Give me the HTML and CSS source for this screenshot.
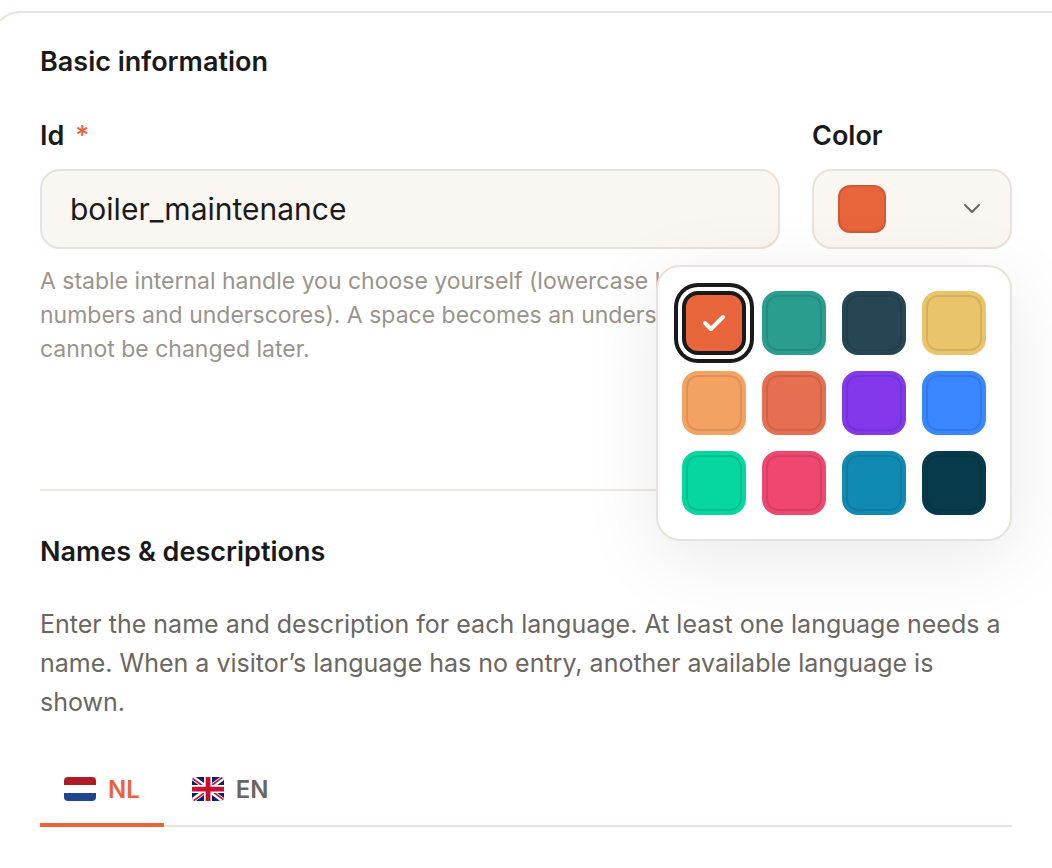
FILE: index.html
```html
<!DOCTYPE html>
<html lang="en">
<head>
  <meta charset="UTF-8" />
  <meta name="viewport" content="width=device-width, initial-scale=1.0" />
  <title>Basic information</title>
  <link rel="stylesheet" href="styles.css">
</head>
<body>

<form class="card">
  <section class="basic">
    <h2>Basic information</h2>

    <div class="fields">
      <div class="field">
        <label for="service-id">Id <span class="required">*</span></label>
        <input type="text" id="service-id" class="control" value="boiler_maintenance" required aria-describedby="id-hint">
        <p class="hint" id="id-hint">A stable internal handle you choose yourself (lowercase letters, numbers and underscores). A space becomes an underscore. It cannot be changed later.</p>
      </div>

      <div class="field color-field">
        <label for="color-trigger">Color</label>
        <div class="color-picker">
          <button type="button" id="color-trigger" class="control color-trigger" aria-expanded="true">
            <span class="current-color"></span>
            <svg class="chevron" viewBox="0 0 24 24" aria-hidden="true"><path d="M5 8l7 7 7-7"/></svg>
          </button>

          <div class="palette" id="palette">
            <button type="button" class="swatch orange selected" aria-label="Orange" aria-pressed="true">
              <svg viewBox="0 0 24 24" aria-hidden="true"><path d="M3 12l6 6L21 6"/></svg>
            </button>
            <button type="button" class="swatch teal" aria-label="Teal"></button>
            <button type="button" class="swatch slate" aria-label="Slate"></button>
            <button type="button" class="swatch yellow" aria-label="Yellow"></button>
            <button type="button" class="swatch sand" aria-label="Sand"></button>
            <button type="button" class="swatch coral" aria-label="Coral"></button>
            <button type="button" class="swatch purple" aria-label="Purple"></button>
            <button type="button" class="swatch blue" aria-label="Blue"></button>
            <button type="button" class="swatch mint" aria-label="Mint"></button>
            <button type="button" class="swatch pink" aria-label="Pink"></button>
            <button type="button" class="swatch ocean" aria-label="Ocean"></button>
            <button type="button" class="swatch navy" aria-label="Navy"></button>
          </div>
        </div>
      </div>
    </div>
  </section>

  <section class="names">
    <h2>Names &amp; descriptions</h2>
    <p class="intro">Enter the name and description for each language. At least one language needs a name. When a visitor’s language has no entry, another available language is shown.</p>

    <div class="tabs" role="tablist">
      <button type="button" class="tab active" role="tab" aria-selected="true">
        <svg class="flag" viewBox="0 0 32 24" aria-hidden="true">
          <rect width="32" height="8" fill="#ae1c28"/>
          <rect y="8" width="32" height="8" fill="#fff"/>
          <rect y="16" width="32" height="8" fill="#21468b"/>
        </svg>
        NL
      </button>
      <button type="button" class="tab" role="tab" aria-selected="false">
        <svg class="flag" viewBox="0 0 640 480" aria-hidden="true">
          <path fill="#012169" d="M0 0h640v480H0z"/>
          <path fill="#fff" d="m75 0 244 181L562 0h78v62L400 241l240 178v61h-80L320 301 81 480H0v-60l239-178L0 64V0z"/>
          <path fill="#c8102e" d="m424 281 216 159v40L369 281zm-184 20 6 35L54 480H0zM640 0v3L391 191l2-44L590 0zM0 0l239 176h-60L0 42z"/>
          <path fill="#fff" d="M241 0v480h160V0zM0 160v160h640V160z"/>
          <path fill="#c8102e" d="M0 193v96h640v-96zM273 0v480h96V0z"/>
        </svg>
        EN
      </button>
    </div>
  </section>
</form>

</body>
</html>
```
FILE: styles.css
```css
* {
  box-sizing: border-box;
}

body {
  margin: 0;
  height: 100vh;
  overflow: hidden;
  font-family: Inter, "Liberation Sans", sans-serif;
  color: #1a1a1a;
  background: white;
}

button,
input {
  font-family: inherit;
  color: inherit;
}

.card {
  margin: 11px -40px 0 -8px;
  padding: 30px 78px 80px 46px;
  border: 2px solid #e8e2da;
  border-radius: 28px;
  background: white;
}

h2 {
  margin: 0;
  font-size: 27px;
  font-weight: 600;
  line-height: 38px;
}

.basic {
  padding-bottom: 123px;
  border-bottom: 2px solid #ece8e2;
}

.fields {
  display: flex;
  gap: 32px;
  margin-top: 36px;
}

.field {
  flex: 1;
}

.color-field {
  flex: 0 0 200px;
}

label {
  display: block;
  margin-bottom: 14px;
  font-size: 27px;
  font-weight: 600;
  line-height: 38px;
}

.required {
  margin-left: 4px;
  color: #e8643a;
  font-weight: 500;
}

.control {
  display: block;
  width: 100%;
  height: 80px;
  padding: 0 28px;
  border: 2px solid #e8e2da;
  border-radius: 20px;
  background: #faf6f2;
  font-size: 30px;
}

.hint {
  margin: 15px 0 0;
  color: #9a948c;
  font-size: 23px;
  line-height: 34px;
}

.color-picker {
  position: relative;
}

.color-trigger {
  display: flex;
  align-items: center;
  justify-content: space-between;
  padding: 0 26px 0 24px;
  cursor: pointer;
}

.current-color {
  width: 48px;
  height: 48px;
  border: 2px solid rgba(0, 0, 0, 0.1);
  border-radius: 12px;
  background: #e8643a;
}

svg {
  fill: none;
  stroke-linecap: round;
  stroke-linejoin: round;
}

.chevron {
  width: 24px;
  height: 24px;
  stroke: #6b665f;
  stroke-width: 2;
}

.palette {
  position: absolute;
  top: 96px;
  right: 0;
  display: grid;
  grid-template-columns: repeat(4, 64px);
  gap: 16px;
  padding: 24px;
  border: 2px solid #e8e2da;
  border-radius: 24px;
  background: white;
  box-shadow: 0 16px 80px rgba(0, 0, 0, 0.09);
}

.swatch {
  display: flex;
  align-items: center;
  justify-content: center;
  height: 64px;
  padding: 0;
  border: 4px solid;
  border-radius: 16px;
  box-shadow: inset 0 0 0 2px rgba(0, 0, 0, 0.1);
  cursor: pointer;
}

.swatch svg {
  width: 24px;
  height: 24px;
  stroke: white;
  stroke-width: 4;
}

.orange { background: #e8643a; border-color: #e8643a; }
.teal { background: #2a9d8f; border-color: #2a9d8f; }
.slate { background: #264653; border-color: #264653; }
.yellow { background: #e9c46a; border-color: #e9c46a; }
.sand { background: #f4a261; border-color: #f4a261; }
.coral { background: #e76f51; border-color: #e76f51; }
.purple { background: #8338ec; border-color: #8338ec; }
.blue { background: #3a86ff; border-color: #3a86ff; }
.mint { background: #06d6a0; border-color: #06d6a0; }
.pink { background: #ef476f; border-color: #ef476f; }
.ocean { background: #118ab2; border-color: #118ab2; }
.navy { background: #073b4c; border-color: #073b4c; }

.swatch.selected {
  border-color: #1a1a1a;
  box-shadow: 0 0 0 4px white, 0 0 0 8px #1a1a1a;
}

.names {
  padding-top: 42px;
}

.intro {
  margin: 34px 0 0;
  color: #6b665f;
  font-size: 25px;
  line-height: 39px;
}

.tabs {
  display: flex;
  gap: 4px;
  margin-top: 33px;
  border-bottom: 2px solid #e8e2da;
}

.tab {
  display: flex;
  align-items: center;
  gap: 12px;
  height: 72px;
  margin-bottom: -2px;
  padding: 0 24px;
  border: none;
  border-bottom: 4px solid transparent;
  background: none;
  color: #6b665f;
  font-size: 24px;
  font-weight: 600;
  cursor: pointer;
}

.tab.active {
  border-bottom-color: #e8643a;
  color: #e8643a;
}

.flag {
  width: 32px;
  height: 24px;
  border-radius: 4px;
}
```
